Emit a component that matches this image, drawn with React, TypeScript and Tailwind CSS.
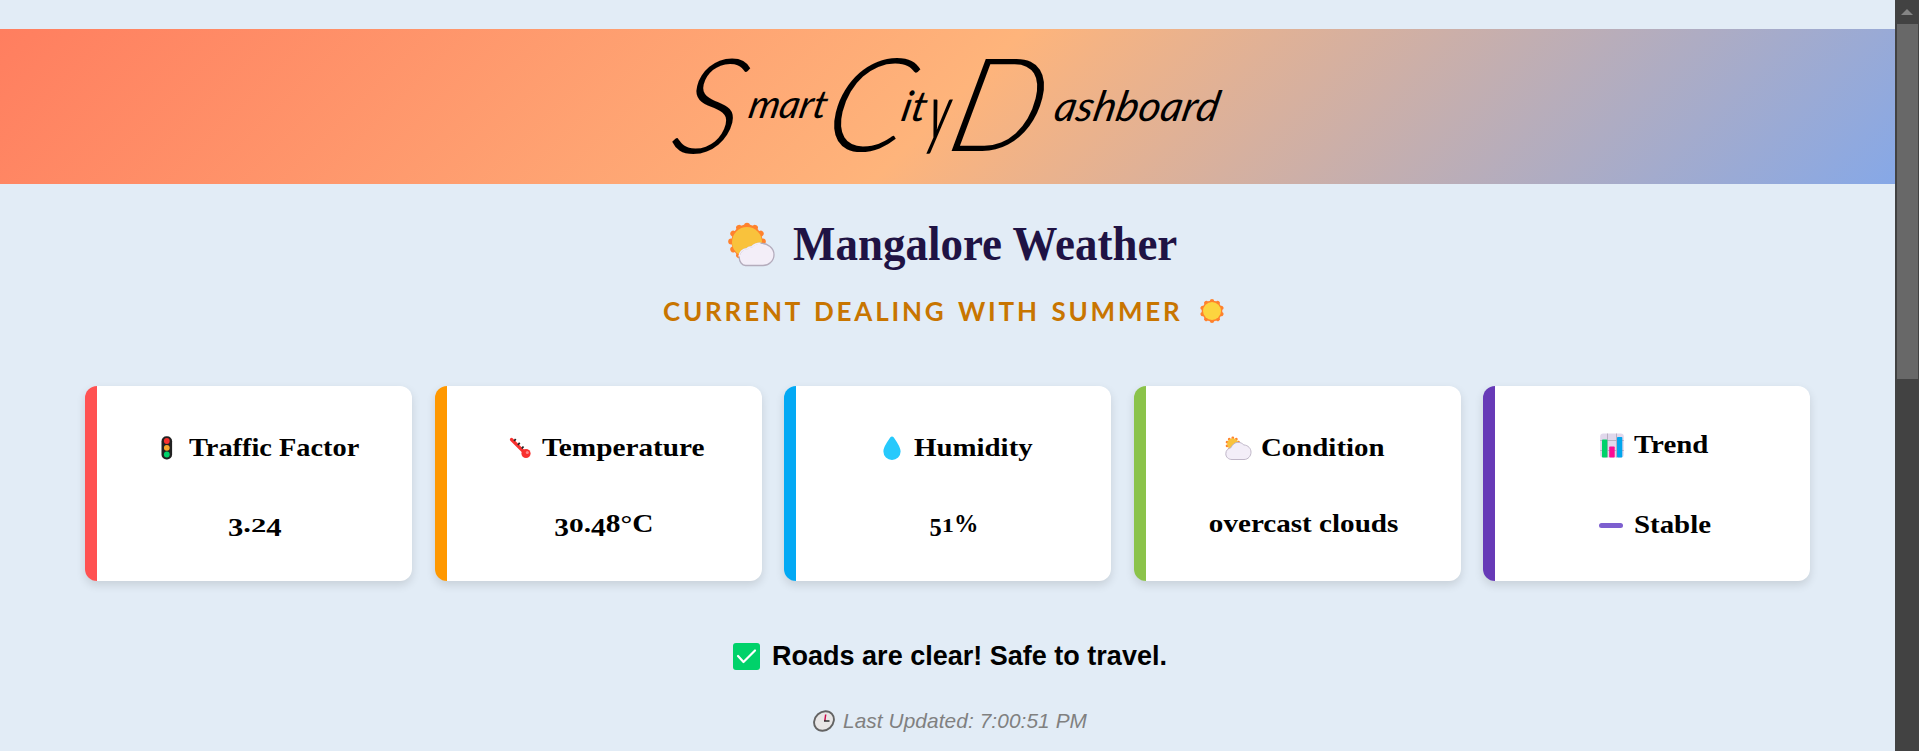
import type { ReactNode } from "react";

const SunBehindCloud = () => (
  <svg width="50" height="46" viewBox="0 0 50 46">
    <g fill="#ff822d">
      <ellipse cx="20" cy="20.500" rx="15.500" ry="17" />
      {[0, 30, 60, 90, 120, 150, 180, 210, 240, 270, 300, 330].map((a) => (
        <circle key={a} cx="20" cy="4.700" r="3" transform={`rotate(${a} 20 20.5)`} />
      ))}
    </g>
    <circle cx="20" cy="21" r="15" fill="#f9c23c" />
    <path
      d="M18.500 44.500a6.500 8.300 0 0 1-6.300-8.200c0-4.800 3.400-8.500 7.600-8.600 1.300-1.400 3-2 4.700-1.700 2.400-2.700 5.500-3.800 9-3.800 7.400 0 13.500 5 13.500 11.500 0 6.200-5.500 10.800-11 10.800Z"
      fill="#f3eef8"
      stroke="#b4acbc"
      strokeWidth="1.300"
    />
    <path d="M12.200 35.500c.2-4.400 3.500-7.700 7.600-7.800 1.300-1.400 3-2 4.700-1.700 2.400-2.700 5.500-3.800 9-3.800" fill="none" stroke="#f3eef8" strokeWidth="1.500" />
  </svg>
);

const Sun = () => (
  <svg width="24" height="24" viewBox="0 0 24 24">
    {[0, 36, 72, 108, 144, 180, 216, 252, 288, 324].map((a) => (
      <circle key={a} cx="12" cy="2.200" r="2.200" fill="#ff822d" transform={`rotate(${a} 12 12)`} />
    ))}
    <circle cx="12" cy="12" r="10.400" fill="#ff822d" />
    <circle cx="12" cy="12" r="9" fill="#fcd53f" />
  </svg>
);

const TrafficLight = () => (
  <svg width="12" height="24" viewBox="0 0 12 24">
    <rect x=".5" y=".2" width="10.600" height="23.300" rx="5" fill="#212121" />
    <circle cx="5.800" cy="5" r="2.900" fill="#f8312f" />
    <circle cx="5.800" cy="11.800" r="2.900" fill="#f9a72c" />
    <circle cx="5.800" cy="18.500" r="2.900" fill="#00d26a" />
  </svg>
);

const Thermometer = () => (
  <svg width="22" height="22" viewBox="0 0 22 22">
    <path d="M2.500 2.500 17 17" stroke="#f8312f" strokeWidth="3.200" strokeLinecap="round" />
    <circle cx="17" cy="16.500" r="4.600" fill="#f8312f" />
    <circle cx="18.300" cy="15.600" r="1.500" fill="#ff8687" />
    <path d="m5.200 4 1.500-2M9 8l1.700-2.200M12.800 11.500l1.700-2" stroke="#212121" strokeWidth="1.800" />
  </svg>
);

const Droplet = () => (
  <svg width="18" height="24" viewBox="0 0 18 24">
    <path d="M7.400 1.300a2 2 0 0 1 3.200 0C13.200 5.300 17.600 11 17.600 15.500A8.500 8.300 0 0 1 .4 15.500C.4 11 4.800 5.300 7.400 1.300Z" fill="#26c9fc" />
  </svg>
);

const CloudBehindSun = () => (
  <svg width="27" height="25" viewBox="0 0 27 25">
    {[0, 36, 72, 108, 144, 180, 216, 252, 288, 324].map((a) => (
      <circle key={a} cx="7.800" cy="2" r="1.400" fill="#ff822d" transform={`rotate(${a} 7.8 8)`} />
    ))}
    <circle cx="7.800" cy="8" r="5.700" fill="#f9c23c" />
    <path d="M7 23.500c-3.500 0-6.200-2.300-6.200-5.700 0-3.500 2.500-5.600 5-6C7.500 8.500 10 6.300 13 6.300c2.500 0 4.300 1.100 5.800 2.600 4.500.4 7.200 3.600 7.200 7.300 0 4-3 7.300-7 7.300Z" fill="#f3eef8" stroke="#b9b0c2" strokeWidth=".9" />
  </svg>
);

const BarChart = () => (
  <svg width="24" height="25" viewBox="0 0 24 25">
    <rect x=".2" y=".5" width="23.600" height="24" rx="3" fill="#e1d8ec" />
    <path d="M7.500.5v24M16.500.5v24M.2 7.500h23.600M.2 17.500h23.600" stroke="#b4acbc" strokeWidth=".9" />
    <rect x="2" y="6.500" width="5.300" height="18" rx=".8" fill="#00d26a" />
    <rect x="9.200" y="13.500" width="5.500" height="11" rx=".8" fill="#fc0a94" />
    <rect x="17" y="4" width="5.300" height="20.500" rx=".8" fill="#00a6ed" />
  </svg>
);

const Minus = () => (
  <svg width="24" height="5" viewBox="0 0 24 5">
    <rect width="24" height="5" rx="2.500" fill="#7d5fcf" />
  </svg>
);

const CheckBox = () => (
  <svg width="27" height="27" viewBox="0 0 27 27">
    <rect width="27" height="27" rx="3" fill="#00d26a" />
    <path d="m5 13 5.500 6L22 7.500" fill="none" stroke="#fff" strokeWidth="2.200" strokeLinecap="round" strokeLinejoin="round" />
  </svg>
);

const Clock = () => (
  <svg width="22" height="22" viewBox="0 0 22 22">
    <ellipse cx="11" cy="11" rx="10.600" ry="9" transform="rotate(-42 11 11)" fill="#e8e6e6" stroke="#636363" strokeWidth="1.900" />
    <path d="m11.800 11 .9-6.500" stroke="#ca0b4a" strokeWidth="1.500" />
    <path d="M11 11h5.500" stroke="#212121" strokeWidth="1.400" />
  </svg>
);

/* Old-style numerals: 0-2 sit at x-height, 3-5, 7 and 9 hang below the baseline. */
const Value = ({ text }: { text: string }) => (
  <>
    {text.split("").map((c, i) => {
      if ("012".includes(c)) return <span key={i} className="inline-block origin-[50%_27px] scale-y-[0.74]">{c}</span>;
      if ("34579".includes(c)) return <span key={i} className="inline-block translate-y-1">{c}</span>;
      return c;
    })}
  </>
);

interface CardProps {
  bar: string;
  icon: ReactNode;
  title: string;
  titleWidth: string;
  stretch?: string;
  children: ReactNode;
  spacing?: string;
}

const Card = ({ bar, icon, title, titleWidth, children, stretch = "scale-x-[1.11]", spacing = "pt-11 gap-10" }: CardProps) => (
  <section
    className={`flex h-[195px] flex-col items-center rounded-xl border-l-12 bg-white text-[26px] leading-9 font-bold whitespace-nowrap shadow-[0_4px_10px_rgba(0,0,0,0.12)] ${bar} ${spacing}`}
  >
    <h2 className="flex h-9 items-center gap-1.5">
      <span className="flex w-[33px] justify-center">{icon}</span>
      <span className={titleWidth}>
        <span className={`inline-block origin-left ${stretch}`}>{title}</span>
      </span>
    </h2>
    <div className="flex h-9 items-center">{children}</div>
  </section>
);

export default function App() {
  return (
    <div className="flex h-[751px] w-full overflow-hidden bg-[#e2ecf6] text-black">
      <main className="flex w-[1895px] shrink-0 flex-col pt-[29px]">
        <header className="h-[155px] bg-[linear-gradient(135deg,#ff7e5f,#feb47b,#86a8e7)]">
          <h1 className="flex items-start pl-[680px] font-['Lato'] leading-none font-light whitespace-pre italic">
            <span className="mt-[7px] w-[70px] -skew-x-14 text-[132px]">S</span>
            <span className="mt-[55px] w-[81px] -skew-x-12 text-[39px] font-normal">mart</span>
            <span className="mt-[7px] w-[72px] -skew-x-14 text-[130px]">C</span>
            <span className="mt-[55px] w-[29px] -skew-x-12 text-[42px] font-normal">it</span>
            <span className="mt-[55px] w-[24px] origin-[50%_16px] -skew-x-16 scale-y-[1.9] text-[42px] font-normal">y</span>
            <span className="mt-[7px] w-[100px] -skew-x-14 text-[130px]">D</span>
            <span className="mt-[55px] -skew-x-12 text-[42px] font-normal tracking-[0.3px]">ashboard</span>
          </h1>
        </header>

        <h2 className="mt-7 flex h-16 items-center gap-2 pl-[719px] font-['Liberation_Serif'] text-[48px] leading-[64px] font-bold whitespace-nowrap text-[#1f1344]">
          <span className="flex w-[66px] justify-center">
            <SunBehindCloud />
          </span>
          <span className="origin-left scale-x-[0.937]">Mangalore Weather</span>
        </h2>

        <p className="mt-[15px] flex h-10 items-center pl-[663px] font-['Lato'] text-[26px] leading-10 font-bold tracking-[2.800px] whitespace-nowrap text-[#c87500] [word-spacing:2.500px]">
          <span className="w-[537px]">CURRENT DEALING WITH SUMMER</span>
          <Sun />
        </p>

        <div className="mt-[55px] ml-[85.250px] grid w-[1725px] grid-cols-5 gap-[22.500px] font-['Liberation_Serif']">
          <Card bar="border-[#ff5252]" icon={<TrafficLight />} title="Traffic Factor" titleWidth="w-[170px]" stretch="scale-x-[1.09]">
            <span className="scale-x-[1.18]"><Value text="3.24" /></span>
          </Card>
          <Card bar="border-[#ff9800]" icon={<Thermometer />} title="Temperature" titleWidth="w-[163px]" stretch="scale-x-[1.125]">
            <span className="scale-x-[1.13]"><Value text="30.48°C" /></span>
          </Card>
          <Card bar="border-[#03a9f4]" icon={<Droplet />} title="Humidity" titleWidth="w-[118px]">
            <span className="scale-x-[0.94]"><Value text="51%" /></span>
          </Card>
          <Card bar="border-[#8bc34a]" icon={<CloudBehindSun />} title="Condition" titleWidth="w-[123px]">
            <span className="scale-x-[1.12]">overcast clouds</span>
          </Card>
          <Card bar="border-[#673ab7]" icon={<BarChart />} title="Trend" titleWidth="w-[76px]" spacing="pt-[41px] gap-11">
            <span className="flex items-center gap-1.5">
              <span className="flex w-[33px] justify-center"><Minus /></span>
              <span className="w-[77px]"><span className="inline-block origin-left scale-x-[1.11]">Stable</span></span>
            </span>
          </Card>
        </div>

        <p className="mt-[57px] flex h-9 items-center gap-[7px] pl-[728px] font-['Liberation_Sans'] text-[28px] leading-9 font-bold whitespace-nowrap">
          <span className="flex w-[37px] justify-center"><CheckBox /></span>
          <span className="origin-left scale-x-[0.965]">Roads are clear! Safe to travel.</span>
        </p>

        <p className="mt-[33px] flex h-7 items-center gap-[5px] pl-[810px] font-['Liberation_Sans'] text-[20.800px] leading-7 tracking-[0.100px] whitespace-nowrap text-[#808080] italic">
          <span className="flex w-[28px] justify-center"><Clock /></span>
          Last Updated: 7:00:51 PM
        </p>
      </main>

      <aside className="flex w-6 shrink-0 flex-col items-center bg-[#424242]">
        <div className="flex h-6 items-center justify-center">
          <svg width="12" height="6" viewBox="0 0 12 6">
            <path d="M6 0 12 6H0Z" fill="#858585" />
          </svg>
        </div>
        <div className="h-[355px] w-[21px] bg-[#686868]" />
      </aside>
    </div>
  );
}
